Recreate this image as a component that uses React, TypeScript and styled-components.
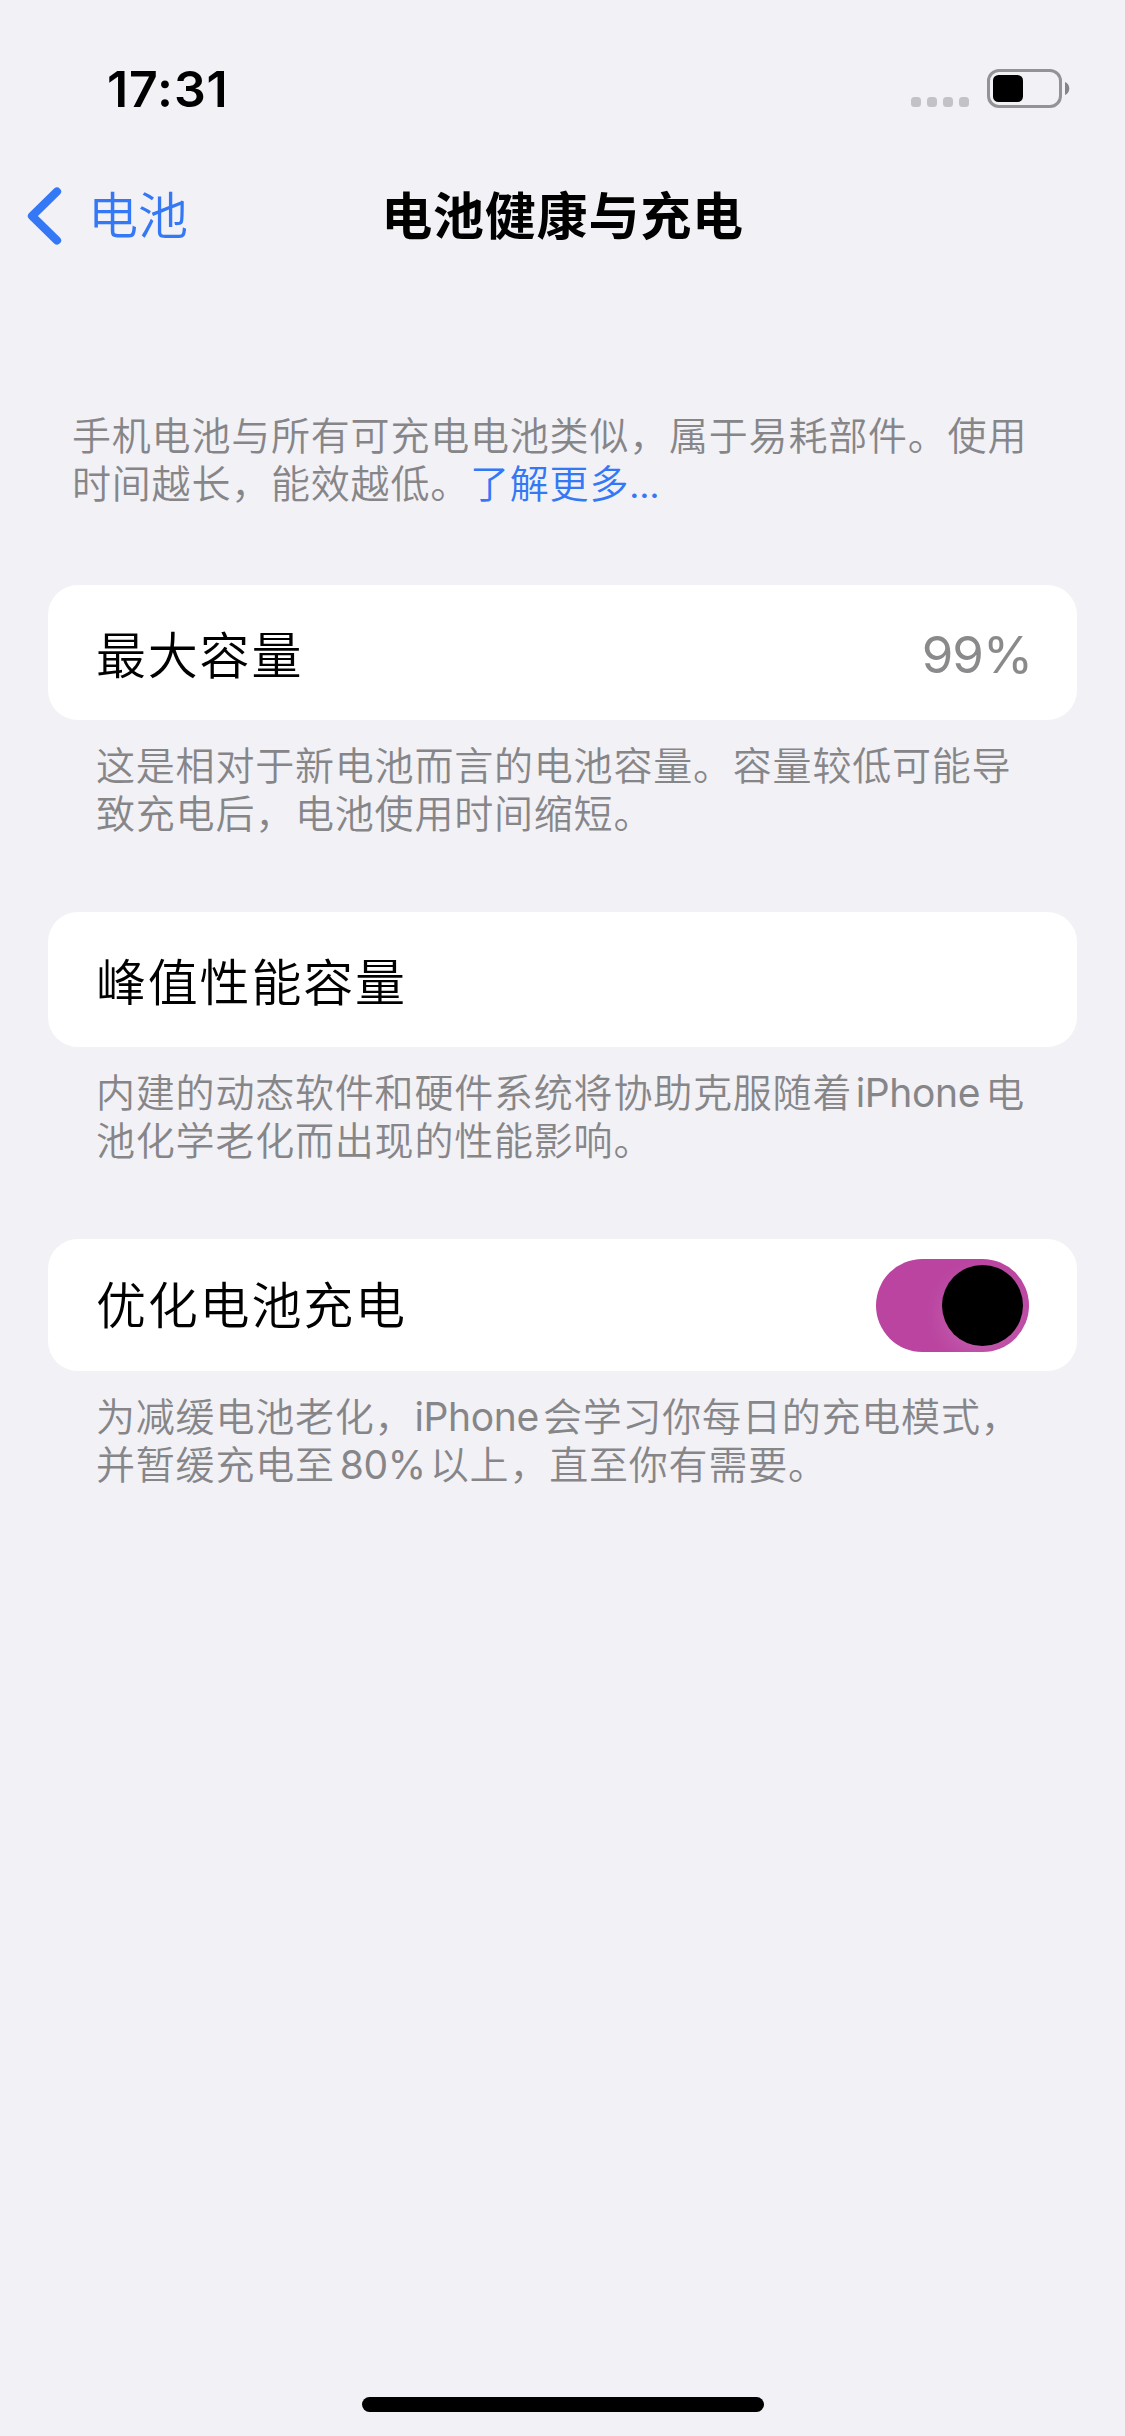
import React, { useState } from "react";
import styled, { createGlobalStyle } from "styled-components";

const BLUE = "#3478f6";
const GRAY = "#868689";

const GlobalStyle = createGlobalStyle`
  * { box-sizing: border-box; }
  body {
    margin: 0;
    background: #f2f1f6;
    color: #000;
    font-family: Inter, "Noto Sans CJK SC DemiLight", "Noto Sans CJK SC", sans-serif;
  }
`;

const Screen = styled.div`
  width: 1125px;
  height: 2436px;
  display: flex;
  flex-direction: column;
  overflow: hidden;
  background: #f2f1f6;
`;

const StatusBar = styled.header`
  height: 132px;
  padding: 45px 55px 0 107px;
  display: flex;
  justify-content: space-between;
`;

const Clock = styled.time`
  height: 88px;
  line-height: 88px;
  font-size: 50px;
  font-weight: 600;
  letter-spacing: 0.9px;
`;

const StatusIcons = styled.div`
  height: 39px;
  margin-top: 24px;
  display: flex;
  align-items: flex-end;
  gap: 18px;
`;

const Signal = styled.div`
  display: flex;
  gap: 6px;
  margin-bottom: 1px;
`;

const SignalDot = styled.i`
  width: 10px;
  height: 10px;
  border-radius: 3.5px;
  background: #c3c2c7;
`;

const NavBar = styled.nav`
  height: 168px;
  padding: 0 27px;
  display: grid;
  grid-template-columns: 1fr auto 1fr;
  align-items: center;
`;

const BackButton = styled.button`
  display: flex;
  align-items: center;
  gap: 25px;
  padding: 0;
  border: 0;
  background: none;
  color: ${BLUE};
  font: inherit;
  font-size: 50px;
  line-height: 60px;
  letter-spacing: 0;
`;

const Title = styled.h1`
  margin: 0;
  padding-top: 2px;
  font-family: Inter, "Noto Sans CJK SC", sans-serif;
  font-size: 51px;
  line-height: 60px;
  font-weight: 600;
  letter-spacing: 0.8px;
`;

const Content = styled.main`
  flex: 1;
  padding: 112px 48px 0;
`;

const Note = styled.p<{ $inset: number; $gap: number }>`
  margin: 0 0 ${(p) => p.$gap}px;
  padding-left: ${(p) => p.$inset}px;
  color: ${GRAY};
  font-size: 39px;
  line-height: 48px;
  letter-spacing: 0.8px;
  white-space: nowrap;
`;

const Line = styled.span`
  display: block;
`;

const Latin = styled.span<{ $before?: number; $after?: number }>`
  margin-left: ${(p) => p.$before ?? 0}px;
  margin-right: ${(p) => p.$after ?? 0}px;
  letter-spacing: -0.35px;
`;

const Link = styled.a`
  color: ${BLUE};
`;

const Ellipsis = styled.span`
  font-size: 35px;
  line-height: 0;
  letter-spacing: 0;
`;

const Card = styled.section<{ $height: number; $drop: number }>`
  height: ${(p) => p.$height}px;
  margin-bottom: 22px;
  padding: ${(p) => p.$drop}px 48px 0;
  display: flex;
  align-items: center;
  justify-content: space-between;
  border-radius: 30px;
  background: #fff;
`;

const Label = styled.span`
  padding-top: 2px;
  font-size: 50px;
  line-height: 60px;
  letter-spacing: 1.8px;
`;

const Value = styled.span`
  margin-right: -3px;
  color: #8a8a8c;
  font-size: 51px;
  line-height: 60px;
  letter-spacing: -1px;
`;

const Switch = styled.button<{ $on: boolean }>`
  width: 153px;
  height: 93px;
  padding: 6px;
  display: flex;
  justify-content: ${(p) => (p.$on ? "flex-end" : "flex-start")};
  border: 0;
  border-radius: 47px;
  overflow: hidden;
  background: ${(p) => (p.$on ? "#ba44a0" : "#e9e9eb")};
`;

const Knob = styled.span`
  width: 81px;
  height: 81px;
  border-radius: 50%;
  background: #000;
  box-shadow: 0 9px 24px rgba(255, 255, 255, 0.13);
`;

const HomeIndicator = styled.div`
  width: 402px;
  height: 15px;
  margin: 0 auto 24px;
  border-radius: 8px;
  background: #000;
`;

const Battery = () => (
  <svg width="83" height="39" viewBox="0 0 83 39" fill="none">
    <rect x="1.5" y="1.5" width="72" height="36" rx="10.5" stroke="#939395" strokeWidth="3" />
    <rect x="6" y="6" width="30" height="27" rx="5.5" fill="#000" />
    <path d="M78 13c2.700 1 4.300 3.600 4.300 6.500s-1.600 5.500-4.300 6.500z" fill="#858587" />
  </svg>
);

const Chevron = () => (
  <svg width="36" height="60" viewBox="0 0 36 60" fill="none">
    <path
      d="M30 5.500L5 30L30 54.500"
      stroke="currentColor"
      strokeWidth="8.200"
      strokeLinecap="round"
      strokeLinejoin="round"
    />
  </svg>
);

export default function App() {
  const [optimized, setOptimized] = useState(true);

  return (
    <>
      <GlobalStyle />
      <Screen lang="zh-CN">
        <StatusBar>
          <Clock>17:31</Clock>
          <StatusIcons>
            <Signal>
              <SignalDot />
              <SignalDot />
              <SignalDot />
              <SignalDot />
            </Signal>
            <Battery />
          </StatusIcons>
        </StatusBar>

        <NavBar>
          <BackButton>
            <Chevron />
            电池
          </BackButton>
          <Title>电池健康与充电</Title>
        </NavBar>

        <Content>
          <Note $inset={24} $gap={77}>
            <Line>手机电池与所有可充电电池类似，属于易耗部件。使用</Line>
            <Line>
              时间越长，能效越低。<Link>了解更多<Ellipsis>…</Ellipsis></Link>
            </Line>
          </Note>

          <Card $height={135} $drop={4}>
            <Label>最大容量</Label>
            <Value>99%</Value>
          </Card>
          <Note $inset={48} $gap={74}>
            <Line>这是相对于新电池而言的电池容量。容量较低可能导</Line>
            <Line>致充电后，电池使用时间缩短。</Line>
          </Note>

          <Card $height={135} $drop={4}>
            <Label>峰值性能容量</Label>
          </Card>
          <Note $inset={48} $gap={74}>
            <Line>
              内建的动态软件和硬件系统将协助克服随着
              <Latin $before={3.5} $after={5}>iPhone</Latin>电
            </Line>
            <Line>池化学老化而出现的性能影响。</Line>
          </Note>

          <Card $height={132} $drop={0}>
            <Label>优化电池充电</Label>
            <Switch $on={optimized} onClick={() => setOptimized(!optimized)}>
              <Knob />
            </Switch>
          </Card>
          <Note $inset={48} $gap={0}>
            <Line>
              为减缓电池老化，<Latin $after={4}>iPhone</Latin>会学习你每日的充电模式，
            </Line>
            <Line>
              并暂缓充电至<Latin $before={5} $after={4}>80%</Latin>以上，直至你有需要。
            </Line>
          </Note>
        </Content>

        <HomeIndicator />
      </Screen>
    </>
  );
}
